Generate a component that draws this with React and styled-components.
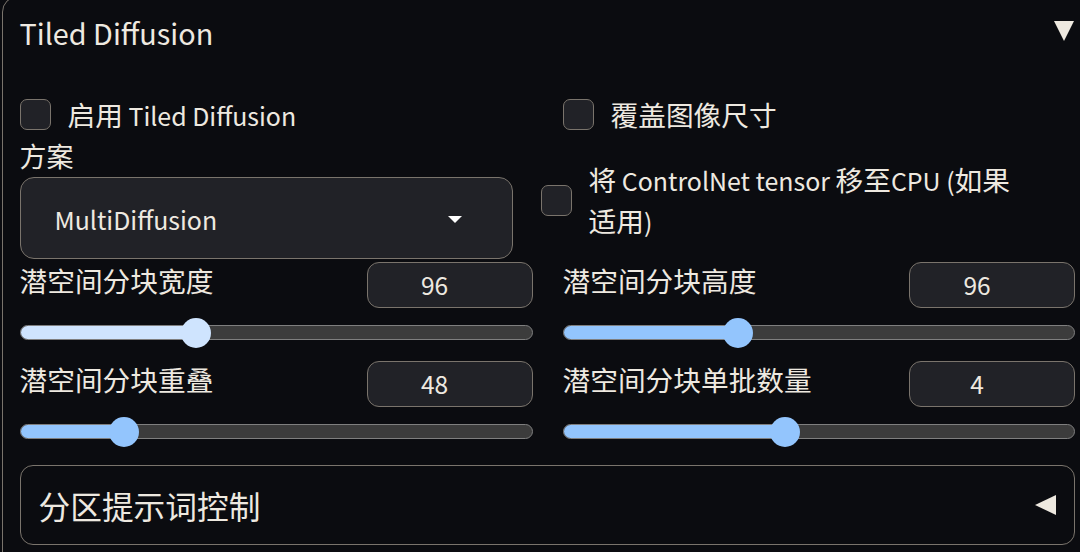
import React from 'react';
import styled, { createGlobalStyle } from 'styled-components';

const textColor = '#eee9e0';
const borderColor = '#7a746c';
const fieldBg = '#212227';

const GlobalStyle = createGlobalStyle`
  html, body {
    margin: 0;
    padding: 0;
    background: #0b0c10;
    overflow: hidden;
  }
  body {
    font-family: "Noto Sans CJK SC", "Noto Sans", sans-serif;
    color: ${textColor};
    text-align: left;
  }
`;

const Page = styled.div`
  width: 1080px;
  height: 552px;
  overflow: hidden;
  background: #0b0c10;
`;

const Panel = styled.div`
  box-sizing: border-box;
  margin: -4px 0 0 2px;
  width: 1092px;
  padding: 0 18px 0 16.5px;
  border: 1.5px solid ${borderColor};
  border-radius: 16px;
  min-height: 600px;
`;

/* latin runs render a bit smaller than the CJK glyphs next to them */
const Latin = styled.span`
  font-size: 0.9em;
  line-height: 1;
`;

function T({ children }) {
  const parts = String(children).split(/([\x20-\x7e]*[A-Za-z0-9()][\x20-\x7e]*)/);
  return parts.map((p, i) =>
    i % 2 === 1 ? <Latin key={i}>{p}</Latin> : p
  );
}

const Header = styled.div`
  display: flex;
  align-items: center;
  justify-content: space-between;
  padding-top: 14px;
  line-height: 40px;
  font-size: 32px;
`;

const Caret = styled.span`
  width: 0;
  height: 0;
  border-left: 10px solid transparent;
  border-right: 10px solid transparent;
  border-top: 20px solid ${textColor};
  margin-right: 1px;
`;

const LeftCaret = styled.span`
  width: 0;
  height: 0;
  border-top: 10.5px solid transparent;
  border-bottom: 10.5px solid transparent;
  border-right: 21px solid ${textColor};
  margin-right: 1px;
`;

const Grid = styled.div`
  display: grid;
  grid-template-columns: ${(p) => p.$cols || '513px 1fr'};
  column-gap: ${(p) => p.$gap || '30px'};
  margin-top: ${(p) => p.$top || '0'};
  align-items: ${(p) => p.$align || 'start'};
`;

const CheckRow = styled.label`
  display: flex;
  align-items: center;
  gap: 17px;
  font-size: 27.7px;
  line-height: 36px;
`;

const Box = styled.span`
  flex: none;
  box-sizing: border-box;
  width: 31px;
  height: 31px;
  border: 1.5px solid ${borderColor};
  border-radius: 7px;
  background: ${fieldBg};
`;

const CheckText = styled.span`
  line-height: 41px;
`;

const FieldLabel = styled.div`
  font-size: 27px;
  line-height: 30px;
`;

const Dropdown = styled.div`
  box-sizing: border-box;
  margin-top: 6px;
  height: 82px;
  display: flex;
  align-items: center;
  justify-content: space-between;
  padding: 0 50px 0 34px;
  border: 1.5px solid ${borderColor};
  border-radius: 14px;
  background: ${fieldBg};
  font-size: 27.7px;
`;

const SmallCaret = styled.span`
  width: 0;
  height: 0;
  border-left: 7px solid transparent;
  border-right: 7px solid transparent;
  border-top: 7px solid #ffffff;
  margin-top: 2px;
`;

const SliderBlock = styled.div`
  display: flex;
  flex-direction: column;
`;

const SliderHead = styled.div`
  display: flex;
  justify-content: space-between;
  align-items: flex-start;
  font-size: 27.7px;
  line-height: 36px;
`;

const NumBox = styled.div`
  box-sizing: border-box;
  width: 166px;
  height: 46px;
  padding-right: 30px;
  border: 1.5px solid ${borderColor};
  border-radius: 12px;
  background: ${fieldBg};
  display: flex;
  align-items: center;
  justify-content: center;
  font-size: 24.5px;
`;

const Track = styled.div`
  position: relative;
  box-sizing: border-box;
  margin-top: 17px;
  height: 15px;
  border: 1.5px solid #7f7f7f;
  border-radius: 8px;
  background: #3c3c3c;
`;

const Fill = styled.div`
  height: 100%;
  border-radius: 8px 0 0 8px;
  background: ${(p) => p.$color};
`;

const Thumb = styled.div`
  position: absolute;
  top: 50%;
  width: 30px;
  height: 30px;
  border-radius: 50%;
  background: ${(p) => p.$color};
  transform: translate(-50%, -50%);
`;

const Accordion = styled.div`
  box-sizing: border-box;
  margin-top: 26px;
  height: 80px;
  display: flex;
  align-items: center;
  justify-content: space-between;
  padding: 0 17px 0 18px;
  border: 1.5px solid ${borderColor};
  border-radius: 13px;
  font-size: 31.7px;
`;

function Slider({ label, value, pct, color = '#93c5fd' }) {
  return (
    <SliderBlock>
      <SliderHead>
        <span>{label}</span>
        <NumBox>{value}</NumBox>
      </SliderHead>
      <Track>
        <Fill $color={color} style={{ width: `${pct}%` }} />
        <Thumb $color={color} style={{ left: `${pct}%` }} />
      </Track>
    </SliderBlock>
  );
}

export default function App() {
  return (
    <Page>
      <GlobalStyle />
      <Panel>
        <Header>
          <span><T>Tiled Diffusion</T></span>
          <Caret />
        </Header>

        <Grid $top="45px">
          <CheckRow>
            <Box />
            <span><T>启用 Tiled Diffusion</T></span>
          </CheckRow>
          <CheckRow>
            <Box />
            <span>覆盖图像尺寸</span>
          </CheckRow>
        </Grid>

        <Grid $cols="493px 1fr" $gap="28px" $top="9px" $align="center">
          <div>
            <FieldLabel>方案</FieldLabel>
            <Dropdown>
              <span><T>MultiDiffusion</T></span>
              <SmallCaret />
            </Dropdown>
          </div>
          <CheckRow>
            <Box />
            <CheckText>
              <T>将 ControlNet tensor 移至CPU (如果</T>
              <br />
              <T>适用)</T>
            </CheckText>
          </CheckRow>
        </Grid>

        <Grid $top="3px">
          <Slider label="潜空间分块宽度" value="96" pct={34.4} color="#cfe4fe" />
          <Slider label="潜空间分块高度" value="96" pct={34.1} />
        </Grid>

        <Grid $top="21px">
          <Slider label="潜空间分块重叠" value="48" pct={20.2} />
          <Slider label="潜空间分块单批数量" value="4" pct={43.3} />
        </Grid>

        <Accordion>
          <span>分区提示词控制</span>
          <LeftCaret />
        </Accordion>
      </Panel>
    </Page>
  );
}
